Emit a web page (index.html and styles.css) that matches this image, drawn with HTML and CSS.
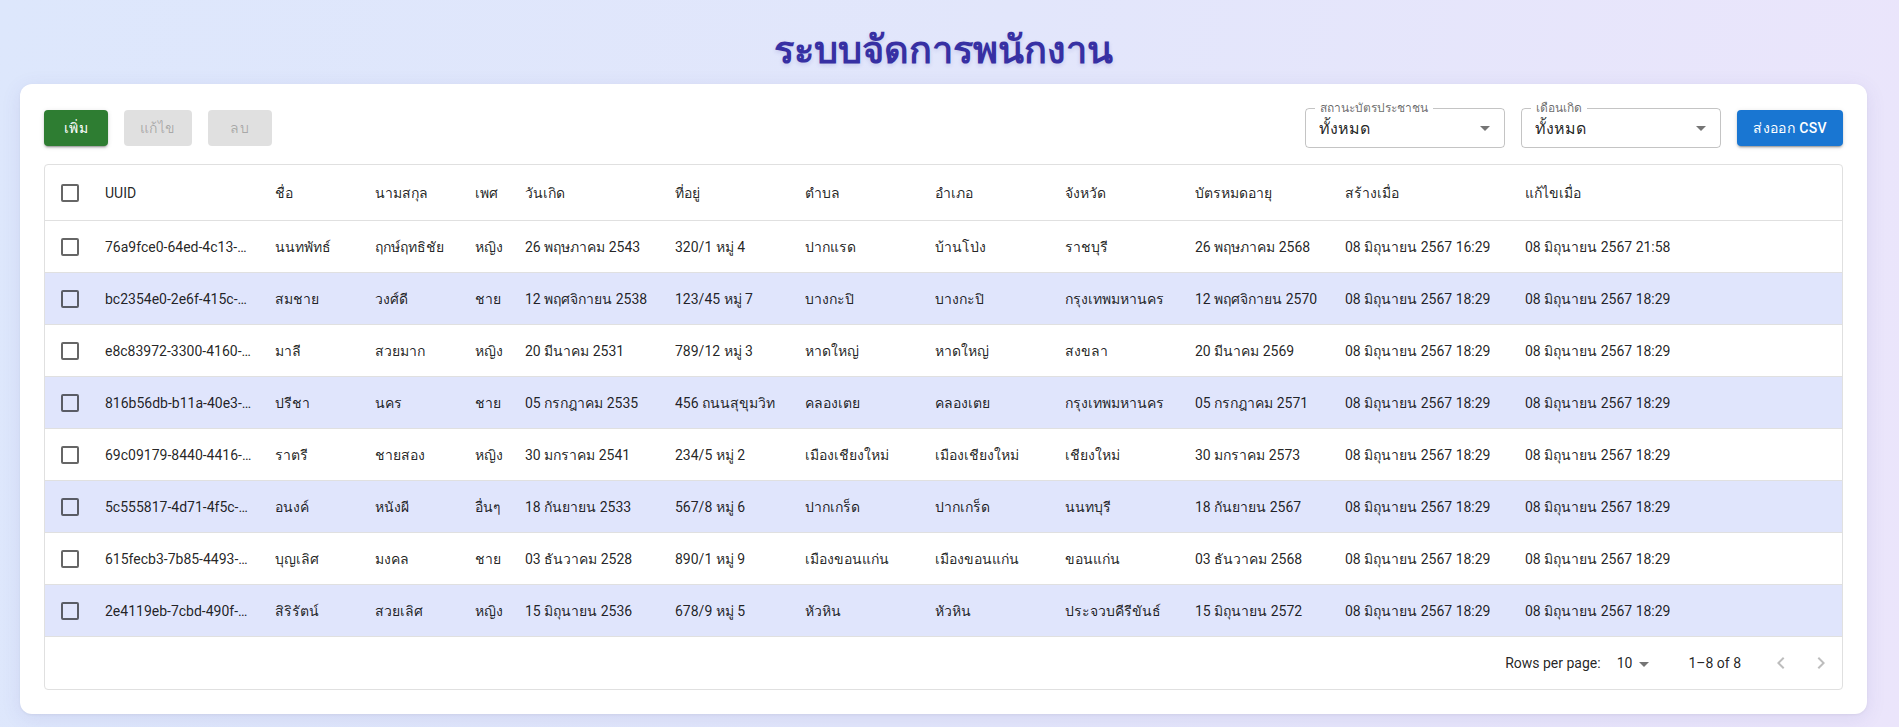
FILE: index.html
```html
<!DOCTYPE html>
<html lang="th">
<head>
<meta charset="utf-8">
<title>ระบบจัดการพนักงาน</title>
<link rel="stylesheet" href="styles.css">
</head>
<body>
<div class="page">
  <h1 class="title">ระบบจัดการพนักงาน</h1>
  <div class="card">
    <div class="toolbar">
      <div class="actions">
        <button class="btn btn-add">เพิ่ม</button>
        <button class="btn btn-disabled">แก้ไข</button>
        <button class="btn btn-disabled">ลบ</button>
      </div>
      <div class="filters">
        <div class="select">
          <span class="select-label">สถานะบัตรประชาชน</span>
          <span class="select-value">ทั้งหมด</span>
          <svg class="select-arrow" viewBox="0 0 24 24" width="24" height="24"><path d="M7 10l5 5 5-5z" fill="rgba(0,0,0,0.54)"/></svg>
        </div>
        <div class="select">
          <span class="select-label">เดือนเกิด</span>
          <span class="select-value">ทั้งหมด</span>
          <svg class="select-arrow" viewBox="0 0 24 24" width="24" height="24"><path d="M7 10l5 5 5-5z" fill="rgba(0,0,0,0.54)"/></svg>
        </div>
        <button class="btn btn-csv">ส่งออก CSV</button>
      </div>
    </div>

    <div class="grid">
      <div class="row head">
        <div class="cell cb"><span class="box"></span></div>
        <div class="cell">UUID</div>
        <div class="cell">ชื่อ</div>
        <div class="cell">นามสกุล</div>
        <div class="cell">เพศ</div>
        <div class="cell">วันเกิด</div>
        <div class="cell">ที่อยู่</div>
        <div class="cell">ตำบล</div>
        <div class="cell">อำเภอ</div>
        <div class="cell">จังหวัด</div>
        <div class="cell">บัตรหมดอายุ</div>
        <div class="cell">สร้างเมื่อ</div>
        <div class="cell">แก้ไขเมื่อ</div>
        <div class="cell"></div>
      </div>

      <div class="row">
        <div class="cell cb"><span class="box"></span></div>
        <div class="cell">76a9fce0-64ed-4c13-…</div>
        <div class="cell">นนทพัทธ์</div>
        <div class="cell">ฤกษ์ฤทธิชัย</div>
        <div class="cell">หญิง</div>
        <div class="cell">26 พฤษภาคม 2543</div>
        <div class="cell">320/1 หมู่ 4</div>
        <div class="cell">ปากแรด</div>
        <div class="cell">บ้านโป่ง</div>
        <div class="cell">ราชบุรี</div>
        <div class="cell">26 พฤษภาคม 2568</div>
        <div class="cell">08 มิถุนายน 2567 16:29</div>
        <div class="cell">08 มิถุนายน 2567 21:58</div>
        <div class="cell"></div>
      </div>

      <div class="row alt">
        <div class="cell cb"><span class="box"></span></div>
        <div class="cell">bc2354e0-2e6f-415c-…</div>
        <div class="cell">สมชาย</div>
        <div class="cell">วงศ์ดี</div>
        <div class="cell">ชาย</div>
        <div class="cell">12 พฤศจิกายน 2538</div>
        <div class="cell">123/45 หมู่ 7</div>
        <div class="cell">บางกะปิ</div>
        <div class="cell">บางกะปิ</div>
        <div class="cell">กรุงเทพมหานคร</div>
        <div class="cell">12 พฤศจิกายน 2570</div>
        <div class="cell">08 มิถุนายน 2567 18:29</div>
        <div class="cell">08 มิถุนายน 2567 18:29</div>
        <div class="cell"></div>
      </div>

      <div class="row">
        <div class="cell cb"><span class="box"></span></div>
        <div class="cell">e8c83972-3300-4160-…</div>
        <div class="cell">มาลี</div>
        <div class="cell">สวยมาก</div>
        <div class="cell">หญิง</div>
        <div class="cell">20 มีนาคม 2531</div>
        <div class="cell">789/12 หมู่ 3</div>
        <div class="cell">หาดใหญ่</div>
        <div class="cell">หาดใหญ่</div>
        <div class="cell">สงขลา</div>
        <div class="cell">20 มีนาคม 2569</div>
        <div class="cell">08 มิถุนายน 2567 18:29</div>
        <div class="cell">08 มิถุนายน 2567 18:29</div>
        <div class="cell"></div>
      </div>

      <div class="row alt">
        <div class="cell cb"><span class="box"></span></div>
        <div class="cell">816b56db-b11a-40e3-…</div>
        <div class="cell">ปรีชา</div>
        <div class="cell">นคร</div>
        <div class="cell">ชาย</div>
        <div class="cell">05 กรกฎาคม 2535</div>
        <div class="cell">456 ถนนสุขุมวิท</div>
        <div class="cell">คลองเตย</div>
        <div class="cell">คลองเตย</div>
        <div class="cell">กรุงเทพมหานคร</div>
        <div class="cell">05 กรกฎาคม 2571</div>
        <div class="cell">08 มิถุนายน 2567 18:29</div>
        <div class="cell">08 มิถุนายน 2567 18:29</div>
        <div class="cell"></div>
      </div>

      <div class="row">
        <div class="cell cb"><span class="box"></span></div>
        <div class="cell">69c09179-8440-4416-…</div>
        <div class="cell">ราตรี</div>
        <div class="cell">ชายสอง</div>
        <div class="cell">หญิง</div>
        <div class="cell">30 มกราคม 2541</div>
        <div class="cell">234/5 หมู่ 2</div>
        <div class="cell">เมืองเชียงใหม่</div>
        <div class="cell">เมืองเชียงใหม่</div>
        <div class="cell">เชียงใหม่</div>
        <div class="cell">30 มกราคม 2573</div>
        <div class="cell">08 มิถุนายน 2567 18:29</div>
        <div class="cell">08 มิถุนายน 2567 18:29</div>
        <div class="cell"></div>
      </div>

      <div class="row alt">
        <div class="cell cb"><span class="box"></span></div>
        <div class="cell">5c555817-4d71-4f5c-…</div>
        <div class="cell">อนงค์</div>
        <div class="cell">หนังผี</div>
        <div class="cell">อื่นๆ</div>
        <div class="cell">18 กันยายน 2533</div>
        <div class="cell">567/8 หมู่ 6</div>
        <div class="cell">ปากเกร็ด</div>
        <div class="cell">ปากเกร็ด</div>
        <div class="cell">นนทบุรี</div>
        <div class="cell">18 กันยายน 2567</div>
        <div class="cell">08 มิถุนายน 2567 18:29</div>
        <div class="cell">08 มิถุนายน 2567 18:29</div>
        <div class="cell"></div>
      </div>

      <div class="row">
        <div class="cell cb"><span class="box"></span></div>
        <div class="cell">615fecb3-7b85-4493-…</div>
        <div class="cell">บุญเลิศ</div>
        <div class="cell">มงคล</div>
        <div class="cell">ชาย</div>
        <div class="cell">03 ธันวาคม 2528</div>
        <div class="cell">890/1 หมู่ 9</div>
        <div class="cell">เมืองขอนแก่น</div>
        <div class="cell">เมืองขอนแก่น</div>
        <div class="cell">ขอนแก่น</div>
        <div class="cell">03 ธันวาคม 2568</div>
        <div class="cell">08 มิถุนายน 2567 18:29</div>
        <div class="cell">08 มิถุนายน 2567 18:29</div>
        <div class="cell"></div>
      </div>

      <div class="row alt">
        <div class="cell cb"><span class="box"></span></div>
        <div class="cell">2e4119eb-7cbd-490f-…</div>
        <div class="cell">สิริรัตน์</div>
        <div class="cell">สวยเลิศ</div>
        <div class="cell">หญิง</div>
        <div class="cell">15 มิถุนายน 2536</div>
        <div class="cell">678/9 หมู่ 5</div>
        <div class="cell">หัวหิน</div>
        <div class="cell">หัวหิน</div>
        <div class="cell">ประจวบคีรีขันธ์</div>
        <div class="cell">15 มิถุนายน 2572</div>
        <div class="cell">08 มิถุนายน 2567 18:29</div>
        <div class="cell">08 มิถุนายน 2567 18:29</div>
        <div class="cell"></div>
      </div>

      <div class="footer">
        <span class="rpp">Rows per page:</span>
        <span class="rpp-select">10
          <svg class="rpp-arrow" viewBox="0 0 24 24" width="24" height="24"><path d="M7 10l5 5 5-5z" fill="rgba(0,0,0,0.54)"/></svg>
        </span>
        <span class="displayed">1–8 of 8</span>
        <span class="nav">
          <span class="nav-btn"><svg viewBox="0 0 24 24" width="24" height="24"><path d="M15.41 7.41 14 6l-6 6 6 6 1.41-1.41L10.83 12z" fill="rgba(0,0,0,0.26)"/></svg></span>
          <span class="nav-btn"><svg viewBox="0 0 24 24" width="24" height="24"><path d="M10 6 8.59 7.41 13.17 12l-4.58 4.59L10 18l6-6z" fill="rgba(0,0,0,0.26)"/></svg></span>
        </span>
      </div>
    </div>
  </div>
</div>
</body>
</html>
```

FILE: styles.css
```css
* { box-sizing: border-box; }
html, body { margin: 0; height: 100%; overflow: hidden; }
body {
  background: linear-gradient(100deg, #dde7fc 0%, #e2e6fb 50%, #ebe5fb 100%);
  font-family: Roboto, "Noto Sans", sans-serif;
  color: rgba(0,0,0,0.87);
}
.page {
  padding: 0 32px 12px 20px;
}
.title {
  margin: 0;
  height: 84px;
  padding-top: 27px;
  text-align: center;
  font-size: 38px;
  line-height: 46px;
  font-weight: 700;
  color: #3730a3;
  text-shadow: 0 2px 4px rgba(55,48,163,0.15);
}
.card {
  background: #fff;
  border-radius: 12px;
  padding: 24px;
  box-shadow: 0 4px 20px rgba(80,70,160,0.10), 0 1px 3px rgba(0,0,0,0.05);
}
.toolbar {
  display: flex;
  justify-content: space-between;
  align-items: center;
  height: 40px;
  margin-bottom: 16px;
}
.actions, .filters {
  display: flex;
  align-items: center;
  gap: 16px;
}
.btn {
  font-family: Roboto, "Noto Sans", sans-serif;
  font-size: 14px;
  font-weight: 500;
  height: 36px;
  min-width: 64px;
  padding: 6px 16px;
  border: none;
  border-radius: 4px;
  letter-spacing: 0.4px;
}
.btn-add {
  background: #2e7d32;
  color: #fff;
  box-shadow: 0 3px 1px -2px rgba(0,0,0,0.2), 0 2px 2px 0 rgba(0,0,0,0.14), 0 1px 5px 0 rgba(0,0,0,0.12);
}
.btn-disabled {
  background: rgba(0,0,0,0.12);
  color: rgba(0,0,0,0.26);
}
.btn-csv {
  background: #1976d2;
  color: #fff;
  box-shadow: 0 3px 1px -2px rgba(0,0,0,0.2), 0 2px 2px 0 rgba(0,0,0,0.14), 0 1px 5px 0 rgba(0,0,0,0.12);
}
.select {
  position: relative;
  width: 200px;
  height: 40px;
  border: 1px solid rgba(0,0,0,0.23);
  border-radius: 4px;
  display: flex;
  align-items: center;
  padding-left: 13px;
}
.select-label {
  position: absolute;
  top: -9px;
  left: 9px;
  padding: 0 5px;
  background: #fff;
  font-size: 12px;
  line-height: 16px;
  color: rgba(0,0,0,0.6);
}
.select-value {
  font-size: 16px;
  color: rgba(0,0,0,0.87);
}
.select-arrow {
  position: absolute;
  right: 7px;
  top: 7px;
}
.grid {
  border: 1px solid #e0e0e0;
  border-radius: 4px;
  font-size: 14px;
}
.row {
  display: grid;
  grid-template-columns: 50px 170px 100px 100px 50px 150px 130px 130px 130px 130px 150px 180px 180px 1fr;
  height: 52px;
  border-bottom: 1px solid #e0e0e0;
  align-items: center;
}
.row.head {
  height: 56px;
  font-weight: 400;
}
.row.alt {
  background: #e0e5fc;
}
.cell {
  padding: 0 10px;
  white-space: nowrap;
  overflow: hidden;
}
.cell.cb {
  display: flex;
  justify-content: center;
  padding: 0;
}
.box {
  width: 18px;
  height: 18px;
  border: 2px solid rgba(0,0,0,0.6);
  border-radius: 2px;
}
.footer {
  height: 52px;
  display: flex;
  align-items: center;
  justify-content: flex-end;
  padding-right: 1px;
  font-size: 14px;
}
.rpp-select {
  position: relative;
  margin-left: 8px;
  margin-right: 32px;
  padding-left: 8px;
  padding-right: 24px;
}
.rpp-arrow {
  position: absolute;
  right: 0;
  top: -3px;
}
.nav {
  display: flex;
  margin-left: 20px;
}
.nav-btn {
  width: 40px;
  height: 40px;
  display: flex;
  align-items: center;
  justify-content: center;
}
```
